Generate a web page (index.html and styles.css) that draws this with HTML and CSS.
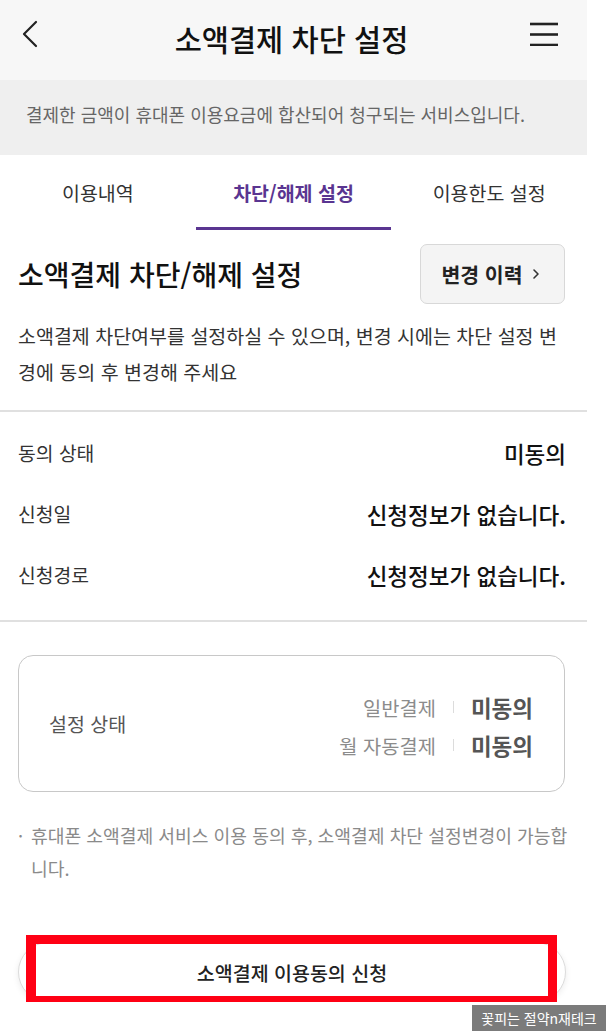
FILE: index.html
```html
<!DOCTYPE html>
<html lang="ko">
<head>
    <meta charset="UTF-8">
    <meta name="viewport" content="width=device-width, initial-scale=1.0">
    <title>소액결제 차단 설정</title>
    <link rel="stylesheet" href="styles.css">
</head>
<body>

<div class="page">
    <!-- 상단 바 -->
    <header class="topbar">
        <a class="topbar-btn back" href="#">
            <svg width="16" height="28" viewBox="0 0 16 28"><polyline points="14,2 2,14 14,26" fill="none" stroke="#222" stroke-width="2.2" stroke-linecap="round" stroke-linejoin="round"/></svg>
        </a>
        <h1 class="topbar-title">소액결제 차단 설정</h1>
        <a class="topbar-btn menu" href="#">
            <svg width="28" height="24" viewBox="0 0 28 24"><g stroke="#222" stroke-width="2.6"><line x1="0" y1="2" x2="28" y2="2"/><line x1="0" y1="12.5" x2="28" y2="12.5"/><line x1="0" y1="23" x2="28" y2="23"/></g></svg>
        </a>
    </header>

    <p class="notice">결제한 금액이 휴대폰 이용요금에 합산되어 청구되는 서비스입니다.</p>

    <nav class="tabs">
        <a class="tab" href="#">이용내역</a>
        <a class="tab active" href="#">차단/해제 설정</a>
        <a class="tab" href="#">이용한도 설정</a>
    </nav>

    <section class="section">
        <div class="section-head">
            <h2 class="section-title">소액결제 차단/해제 설정</h2>
            <button class="history-btn">변경 이력
                <svg width="8" height="12" viewBox="0 0 8 12"><polyline points="2,2 6,6 2,10" fill="none" stroke="#333" stroke-width="1.6" stroke-linecap="round" stroke-linejoin="round"/></svg>
            </button>
        </div>
        <p class="desc">소액결제 차단여부를 설정하실 수 있으며, 변경 시에는 차단 설정 변경에 동의 후 변경해 주세요</p>
    </section>

    <div class="info-list">
        <div class="info-row"><span class="info-label">동의 상태</span><strong class="info-value">미동의</strong></div>
        <div class="info-row"><span class="info-label">신청일</span><strong class="info-value">신청정보가 없습니다.</strong></div>
        <div class="info-row"><span class="info-label">신청경로</span><strong class="info-value">신청정보가 없습니다.</strong></div>
    </div>

    <div class="status-box">
        <span class="status-title">설정 상태</span>
        <div class="status-grid">
            <span class="status-name">일반결제</span><span class="status-sep"></span><strong class="status-value">미동의</strong>
            <span class="status-name">월 자동결제</span><span class="status-sep"></span><strong class="status-value">미동의</strong>
        </div>
    </div>

    <ul class="notes">
        <li><span class="dot">·</span><span>휴대폰 소액결제 서비스 이용 동의 후, 소액결제 차단 설정변경이 가능합니다.</span></li>
    </ul>

    <div class="apply-wrap">
        <button class="apply-btn">소액결제 이용동의 신청</button>
        <span class="mark"></span>
    </div>
</div>

<div class="watermark">꽃피는 절약n재테크</div>

</body>
</html>
```

FILE: styles.css
```css
* {
    box-sizing: border-box;
}
body {
    margin: 0;
    background: #fff;
    font-family: "Noto Sans CJK KR", "Noto Sans", sans-serif;
    color: #222;
}
a {
    color: inherit;
    text-decoration: none;
}
.page {
    width: 587px;
}

/* 상단 바 */
.topbar {
    height: 80px;
    background-color: #f7f7f7;
    display: grid;
    grid-template-columns: 1fr auto 1fr;
    align-items: center;
    padding-bottom: 4px;
}
.topbar-btn {
    display: flex;
    margin-bottom: 8px;
}
.topbar-btn.back {
    padding-left: 22px;
}
.topbar-btn.menu {
    justify-self: end;
    padding-right: 29px;
}
.topbar-title {
    margin: 0 0 0 -4px;
    font-size: 29.5px;
    font-weight: 500;
    color: #111;
    line-height: 40px;
}

.notice {
    margin: 0;
    height: 75px;
    background-color: #efefef;
    display: flex;
    align-items: center;
    padding: 0 26px 8px;
    font-size: 18px;
    color: #666;
}

/* 탭 */
.tabs {
    display: flex;
    height: 75px;
}
.tab {
    flex: 1;
    display: flex;
    align-items: center;
    justify-content: center;
    padding-top: 3px;
    border-bottom: 3px solid transparent;
    font-size: 19.5px;
    color: #333;
}
.tab.active {
    color: #5a3591;
    font-weight: 700;
    border-bottom-color: #5a3591;
}

/* 섹션 */
.section {
    padding: 14px 22px 0 18px;
}
.section-head {
    display: flex;
    align-items: center;
    justify-content: space-between;
}
.section-title {
    margin: 0;
    font-size: 28px;
    font-weight: 500;
    color: #111;
}
.history-btn {
    width: 145px;
    height: 60px;
    background-color: #f4f4f4;
    border: 1px solid #d8d8d8;
    border-radius: 7px;
    font-family: inherit;
    font-size: 20.5px;
    font-weight: 600;
    color: #222;
    display: flex;
    align-items: center;
    justify-content: center;
    gap: 9px;
    padding: 0 4px 0 0;
}
.desc {
    margin: 14px 0 20px;
    font-size: 19.5px;
    line-height: 36px;
    color: #333;
}

/* 정보 목록 */
.info-list {
    border-top: 2px solid #e0e0e0;
    border-bottom: 2px solid #e0e0e0;
    padding: 10px 21px 15px 18px;
}
.info-row {
    height: 61px;
    display: flex;
    align-items: center;
    justify-content: space-between;
}
.info-label {
    font-size: 19.3px;
    color: #333;
}
.info-value {
    font-size: 22.5px;
    font-weight: 500;
    color: #111;
}

/* 설정 상태 */
.status-box {
    margin: 33px 22px 0 18px;
    height: 137px;
    border: 1px solid #c8c8c8;
    border-radius: 15px;
    display: flex;
    align-items: center;
    justify-content: space-between;
    padding: 0 31px 0 30px;
}
.status-title {
    font-size: 19.5px;
    color: #555;
}
.status-grid {
    display: grid;
    grid-template-columns: auto auto auto;
    grid-auto-rows: 38px;
    align-items: center;
    column-gap: 17px;
    padding-top: 5px;
}
.status-name {
    font-size: 19.8px;
    color: #8c8c8c;
    text-align: right;
}
.status-sep {
    width: 1px;
    height: 12px;
    background-color: #dcdcdc;
}
.status-value {
    font-size: 22.5px;
    font-weight: 700;
    color: #555;
}

/* 안내 */
.notes {
    list-style: none;
    margin: 27px 0 0;
    padding: 0 18px;
}
.notes li {
    display: flex;
    font-size: 18.2px;
    line-height: 33px;
    color: #8a8a8a;
}
.dot {
    width: 13px;
    flex-shrink: 0;
}

/* 신청 버튼 */
.apply-wrap {
    position: relative;
    margin: 57px 21px 0 18px;
}
.apply-btn {
    width: 100%;
    height: 60px;
    border: 1px solid #dcdcdc;
    border-radius: 30px;
    background: #fff;
    box-shadow: 0 2px 6px rgba(0, 0, 0, 0.08);
    font-family: inherit;
    font-size: 19.5px;
    font-weight: 500;
    color: #222;
}
.mark {
    position: absolute;
    left: 8px;
    top: -7px;
    width: 531px;
    height: 70px;
    border: 9px solid #ff0014;
    border-left-width: 10px;
    pointer-events: none;
}

.watermark {
    position: fixed;
    right: 0;
    bottom: 0;
    width: 134px;
    height: 26px;
    background-color: #7b7b7b;
    color: #fff;
    font-size: 14px;
    line-height: 26px;
    text-align: center;
}
```
